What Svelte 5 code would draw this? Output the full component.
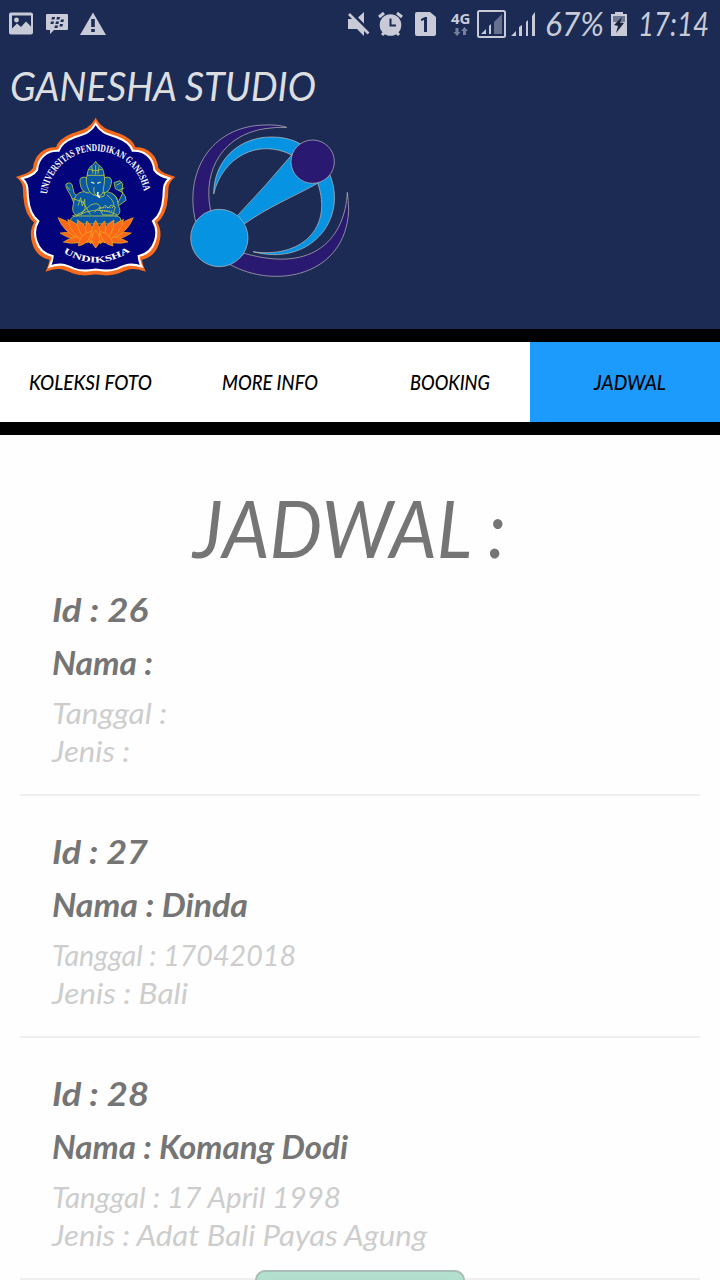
<script>
  const tabs = [
    { label: 'KOLEKSI FOTO', width: 123 },
    { label: 'MORE INFO', width: 96 },
    { label: 'BOOKING', width: 80 },
    { label: 'JADWAL', width: 72, active: true }
  ];

  const bookings = [
    [['Id : 26', 96], ['Nama :', 101], ['Tanggal :', 115], ['Jenis :', 78]],
    [['Id : 27', 96], ['Nama : Dinda', 196], ['Tanggal : 17042018', 244], ['Jenis : Bali', 136]],
    [['Id : 28', 97], ['Nama : Komang Dodi', 296], ['Tanggal : 17 April 1998', 289], ['Jenis : Adat Bali Payas Agung', 375]]
  ];

  // Each petal: tip x, tip y, base x, base y, spread
  const leftPetals = [
    [150, 354, 240, 374, 18],
    [144, 308, 222, 378, 24],
    [160, 381, 246, 368, 18],
    [173, 313, 232, 384, 24],
    [202, 315, 243, 386, 24],
    [230, 318, 251, 388, 24],
    [205, 393, 245, 348, 22]
  ];
  const petals = [
    ...leftPetals,
    ...leftPetals.map(([tx, ty, bx, by, s]) => [514 - tx, ty, 514 - bx, by, s]),
    [257, 316, 257, 390, 24],
    [257, 399, 257, 345, 24]
  ];

  function petalPath([tx, ty, bx, by, s]) {
    const dx = bx - tx;
    const dy = by - ty;
    const len = Math.hypot(dx, dy);
    const nx = (-dy / len) * s;
    const ny = (dx / len) * s;
    const mx = tx + dx * 0.45;
    const my = ty + dy * 0.45;
    return `M${tx} ${ty}Q${mx + nx} ${my + ny} ${bx} ${by}Q${mx - nx} ${my - ny} ${tx} ${ty}Z`;
  }
</script>

{#snippet label(text, width, height, baseline, size)}
  <svg class="label" {width} {height}>
    <text x="0" y={baseline} font-size={size} textLength={width} lengthAdjust="spacingAndGlyphs">{text}</text>
  </svg>
{/snippet}

<div class="screen">
  <header>
    <div class="status">
      <svg width="340" height="48" viewBox="0 0 340 48" fill="#c8cbd7">
        <path fill-rule="evenodd" d="M11 12.500h20q2 0 2 2v18q0 2-2 2H11q-2 0-2-2v-18q0-2 2-2Zm1 3v13l5-5 4 3.500 5-5.500 5 5V15.500Z" />
        <circle cx="16.500" cy="20" r="2.400" />
        <path d="M47 14h20q1 0 1 1v14q0 1-1 1H54l-4 4v-4h-3q-1 0-1-1V15q0-1 1-1Z" />
        <path fill="#1b2b54" d="M52 17h3l-.6 2.500h-3zm5 0h3l-.6 2.500h-3zm-6 4.500h3l-.6 2.500h-3zm5 0h3l-.6 2.500h-3zm5-2h3l-.6 2.500h-3zm-1 4.500h3l-.6 2.500h-3zm-5 1.500h3l-.6 2.500h-3z" />
        <path d="M93 12.500 106 35H80Z" />
        <path fill="#1b2b54" d="M91.200 19h3.600v8h-3.600zm0 10h3.600v3h-3.600z" />
      </svg>
      <svg width="380" height="48" viewBox="340 0 380 48" fill="#c8cbd7">
        <path d="M348 19h6l10 10v7l-7-7h-9Zm10-1.500 6-5.500v11.500Z" />
        <path d="m349 14 19.500 19.500" stroke="#c8cbd7" stroke-width="2.600" />
        <circle cx="390.500" cy="25" r="10.800" />
        <path d="m379 17 5-4m18 4-5-4m-15 22 3-3m14 3-3-3" fill="none" stroke="#c8cbd7" stroke-width="3" />
        <path d="M390.500 18.500v7h5.500" fill="none" stroke="#1b2b54" stroke-width="2" />
        <path d="M417 12h13l6 5v17q0 2-2 2h-17q-2 0-2-2V14q0-2 2-2Z" />
        <path fill="#1b2b54" d="m421 19 4-2h2v15h-3V20l-3 1Z" />
        <text x="451" y="24" class="network" textLength="19.500" lengthAdjust="spacingAndGlyphs">4G</text>
        <path fill="#74809d" d="M455.500 28h3v4h2l-3.500 4-3.500-4h2zm7.500 7h3v-4h2l-3.500-4-3.500 4h2z" />
        <rect x="478" y="11" width="27" height="26" rx="1.500" fill="none" stroke="#c8cbd7" stroke-width="2" />
        <path d="m481 34 5-5v5zm8-8 2-2v10h-2z" />
        <path fill="#66718f" d="m494 22 8-8v20h-8Z" />
        <path d="m511 36 5-5v5zm8-9 3-2v11h-3zm7-5 2-2v16h-2zm6-6 3-4v24h-3z" />
        <text x="545" y="35.500" class="clock" textLength="59" lengthAdjust="spacingAndGlyphs">67%</text>
        <path d="M615 12h8v2h4v22h-16V14h4Z" />
        <path fill="#6f7996" d="M613 16h12v6h-12Z" />
        <path fill="#1b2338" d="m622 17-8 8 4 1-2 7 8-10-4-.5Z" />
        <text x="638" y="35.500" class="clock" textLength="71" lengthAdjust="spacingAndGlyphs">17:14</text>
      </svg>
    </div>

    <div class="brand">{@render label('GANESHA STUDIO', 306, 67, 53, 40)}</div>

    <div class="logos">
      <svg width="170" height="165" viewBox="0 0 510 495">
        <path
          d="M257 14C242 43 216 48 190 57C161 68 145 82 140 100C104 98 75 121 72 160C61 177 42 182 24 187C46 205 41 222 43 246C46 284 60 310 76 322C55 355 66 421 121 432C121 445 116 456 112 465C149 453 166 462 188 472C216 483 238 478 257 475C276 478 298 483 326 472C348 462 365 453 402 465C398 456 393 445 393 432C448 421 459 355 438 322C454 310 468 284 471 246C473 222 468 205 490 187C472 182 453 177 442 160C439 121 410 98 374 100C369 82 353 68 324 57C298 48 272 43 257 14Z"
          fill="#f96a1d" stroke="#f96a1d" stroke-width="6" />
        <path
          transform="translate(257 250) scale(.95) translate(-257 -250)"
          d="M257 14C242 43 216 48 190 57C161 68 145 82 140 100C104 98 75 121 72 160C61 177 42 182 24 187C46 205 41 222 43 246C46 284 60 310 76 322C55 355 66 421 121 432C121 445 116 456 112 465C149 453 166 462 188 472C216 483 238 478 257 475C276 478 298 483 326 472C348 462 365 453 402 465C398 456 393 445 393 432C448 421 459 355 438 322C454 310 468 284 471 246C473 222 468 205 490 187C472 182 453 177 442 160C439 121 410 98 374 100C369 82 353 68 324 57C298 48 272 43 257 14Z"
          fill="#03037c" stroke="#fff" stroke-width="6.500" />
        <path id="motto-arc" d="M111 238A147 147 0 0 1 403 238" fill="none" />
        <path id="name-arc" d="M160 412Q257 473 356 412" fill="none" />
        <text class="seal" font-size="31"><textPath href="#motto-arc" textLength="418" lengthAdjust="spacingAndGlyphs">UNIVERSITAS PENDIDIKAN GANESHA</textPath></text>
        <text class="seal" font-size="26"><textPath href="#name-arc" textLength="214" lengthAdjust="spacingAndGlyphs">UNDIKSHA</textPath></text>
        <g fill="#0759a7" stroke="#b7c83e" stroke-width="2.500" stroke-linejoin="round">
          <path d="M220 235q-24 0-28 30l-12-28q-15-20-12-30l10-4 8 5 6 26 24 20M296 235q25 0 28 28l15-30-23-12-4-18 18-6 8 10-2 25q14 12 12 24l-22 16-28-10" />
          <path d="M218 230q-26 5-28 38-7 24 10 34 57 17 122 0 14-12 3-30-2-36-33-42Z" />
          <path d="M232 188q-26-7-22 16 4 31 28 30M282 188q26-7 22 16-4 31-28 30" />
          <path d="M232 178q-8 23 5 49 8 16 30 15 14-3 13-20 6-29 2-44Z" />
          <path d="M232 181q0-24 19-33l6-9 6 9q19 9 19 33Z" />
          <path d="M238 163q18 9 38 0M245 154l4 22m8-26v28m10-24-3 22M252 216q-4 25 15 30 22 2 15-16M186 250l33 11 22 38M204 272l8-24 5 25 7-20 1 28-11 18M187 302q25-2 55-32 23-10 28 5l-18 18M267 280l12 20h30l7-24-13-6-8 8-10-7-7 8ZM198 304q60-35 124-5M171 214l10 12m138-15 18-10m-12 26 18-8M290 239q23 17 22 36" fill="none" />
          <path d="M182 312q4-10 20-9h110q18 0 20 9v15H182Z" />
          <path d="M270 278h42M275 288h34" stroke="#e3dd47" stroke-dasharray="4 3" />
          <path d="m243 201 10 4m9 0 10-4" stroke="#e8ed9a" stroke-width="4" />
          <path d="M264 231q-4 13 6 16" stroke="#fff" stroke-width="5" fill="none" />
        </g>
        <g fill="#fb6817" stroke="#edb729" stroke-width="1.800">
          <path stroke="none" d="M180 340 220 345H294L334 340 326 372 257 388 190 372Z" />
          {#each petals as petal}
            <path d={petalPath(petal)} />
          {/each}
        </g>
      </svg>

      <svg width="170" height="165" viewBox="0 0 510 495" stroke="#c5c0bd" stroke-width="2">
        <path fill="#291970" d="M32 320C-3 177 73 35 237 30Q281 28 305 37Q272 36 240 41C121 58 50 159 77 287Z" />
        <path fill="#291970" d="M134 448C272 525 482 482 491 286Q490 253 487 232C480 364 393 477 178 415Z" />
        <path fill="#0693e2" d="M86 237C86 123 183 47 302 70Q326 75 347 87L320 120C218 68 112 128 86 237Z" />
        <path fill="#0693e2" d="M435 180C489 316 373 456 204 410C345 431 446 342 398 204Z" />
        <path fill="#0693e2" d="M320 120Q242 213 157 302L178 327C251 275 322 247 398 205Z" />
        <circle fill="#291970" cx="383" cy="140" r="65" />
        <circle fill="#0693e2" cx="103" cy="369" r="86" />
        <path stroke="none" fill="#0693e2" d="m148 302 9 1 21 24-1 12-20-6z" />
      </svg>
    </div>
  </header>

  <nav>
    {#each tabs as tab}
      <div class="tab" class:active={tab.active}>{@render label(tab.label, tab.width, 80, 48, 21)}</div>
    {/each}
  </nav>

  <main>
    <h1>{@render label('JADWAL :', 313, 119, 123, 80)}</h1>
    {#each bookings as lines}
      <article>
        {#each lines as [text, width], i}
          <div class:strong={i < 2} class:muted={i > 1}>
            {@render label(text, width, i < 2 ? 53 : 38, i < 2 ? 35 : 31, i < 2 ? 32 : 28)}
          </div>
        {/each}
      </article>
    {/each}
  </main>
  <div class="toast"></div>
</div>

<style>
  :global(body) { margin: 0; background: #fefefe; }
  .screen {
    position: relative;
    width: 720px;
    height: 1280px;
    overflow: hidden;
    background: #fefefe;
    font-family: Lato, "Open Sans", sans-serif;
    font-style: italic;
  }
  svg { display: block; flex: none; }
  .label { overflow: visible; fill: currentColor; }
  header { height: 329px; background: #1b2b54; color: #dddee0; }
  .status { display: flex; height: 48px; }
  .clock { font-size: 32px; }
  .network { font: bold 15px "Open Sans", sans-serif; }
  .brand { height: 67px; padding-left: 10px; }
  .logos { display: flex; gap: 5px; padding-left: 10px; }
  .seal { font-family: "Liberation Serif", serif; font-style: normal; font-weight: bold; fill: #fff; }
  nav { display: flex; height: 80px; border: solid #000; border-width: 13px 0; background: #fff; color: #000; }
  .tab { display: flex; justify-content: center; width: 180px; font-weight: 500; }
  .active { margin-left: -10px; padding-left: 10px; background: #1d9bfd; }
  main { padding: 0 20px; color: #757575; }
  h1 { height: 119px; margin: 0; padding-left: 173px; font-weight: 400; }
  article { box-sizing: border-box; height: 242px; padding: 33px 32px 0; border-bottom: 2px solid #efefef; }
  .strong { font-weight: 700; }
  .muted { color: #cdcdcd; }
  .toast {
    position: absolute;
    top: 1270px;
    left: 255px;
    box-sizing: border-box;
    width: 210px;
    height: 60px;
    border: 2px solid #a9bdb5;
    border-radius: 10px;
    background: rgba(171, 220, 202, .9);
  }
</style>
